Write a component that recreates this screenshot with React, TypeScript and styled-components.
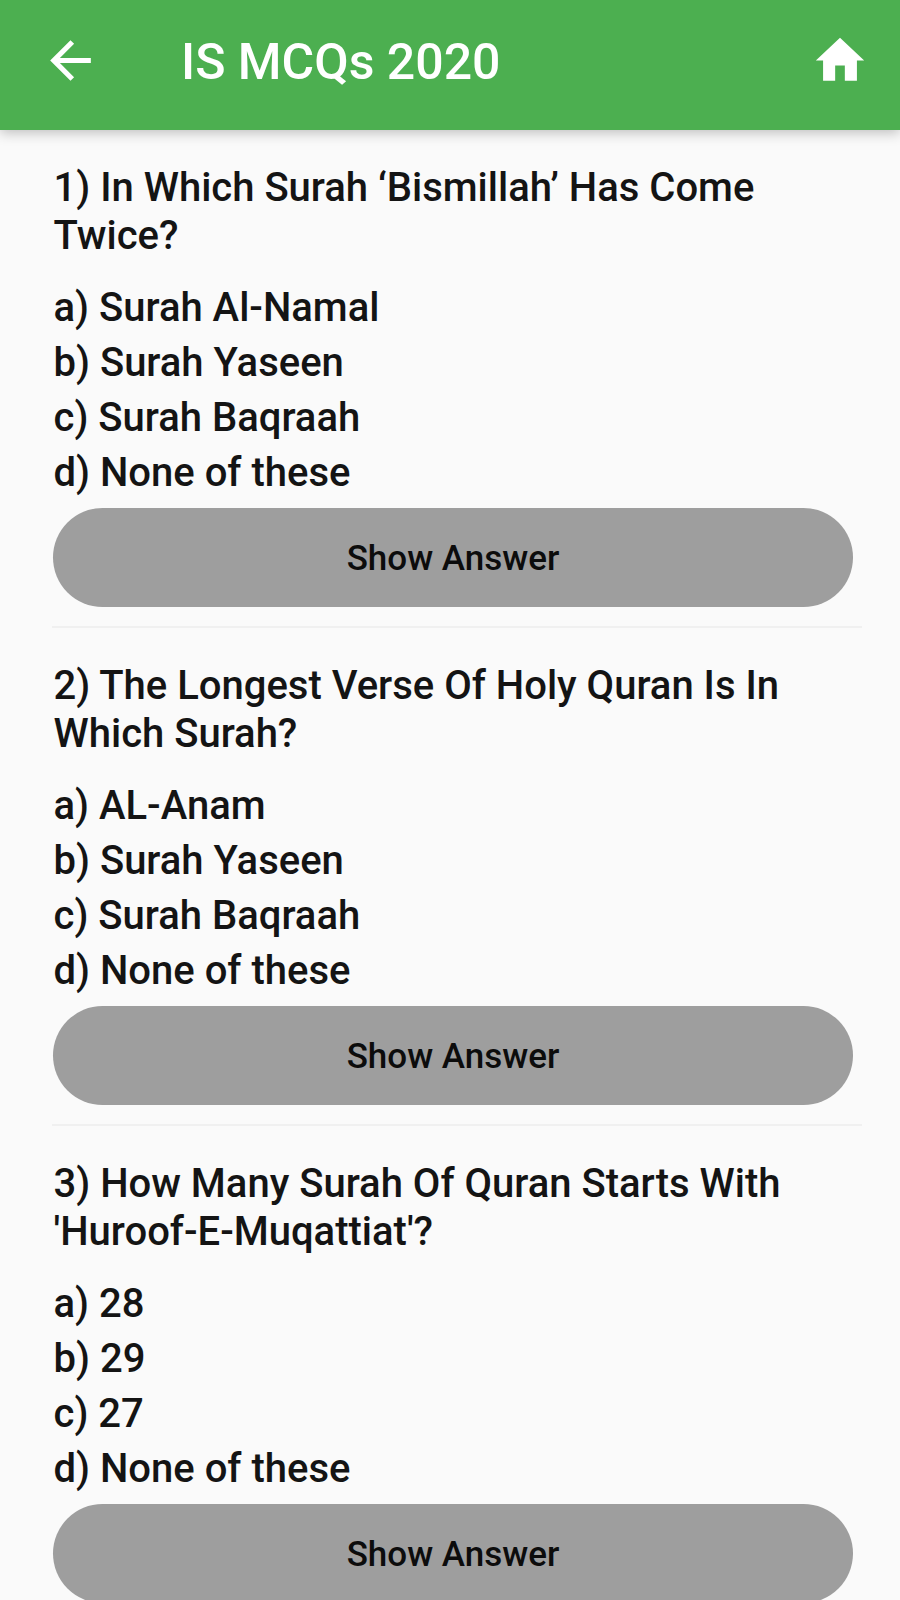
import React from "react";
import styled, { createGlobalStyle } from "styled-components";

const GlobalStyle = createGlobalStyle`
  * { box-sizing: border-box; }
  body { margin: 0; background: #fafafa; overflow: hidden; }
`;

const Screen = styled.div`
  width: 900px;
  height: 1600px;
  overflow: hidden;
  background: #fafafa;
  color: #141414;
  font-family: Roboto, sans-serif;
  font-weight: 500;
`;

const AppBar = styled.header`
  display: flex;
  align-items: center;
  height: 130px;
  padding: 0 31px 9px 40px;
  background: #4caf50;
  color: #fff;
  box-shadow: 0 3px 12px rgba(0, 0, 0, 0.24);
`;

const Title = styled.h1`
  flex: 1;
  margin: 0 0 0 80px;
  padding-top: 2px;
  font-size: 50px;
  font-weight: 500;
  line-height: 60px;
  white-space: nowrap;
`;

const IconButton = styled.button`
  display: flex;
  padding: 0;
  border: 0;
  background: none;
  color: inherit;
`;

const List = styled.main`
  padding: 34px 38px 0 52px;
`;

const Card = styled.section`
  height: 498px;
  padding-left: 1px;
`;

const Question = styled.h2`
  margin: 0 0 21px;
  padding-left: 0.5px;
  font-size: 40px;
  font-weight: 500;
  line-height: 47.5px;
  white-space: pre;
`;

const Option = styled.div`
  height: 55px;
  padding-left: 0.5px;
  font-size: 40px;
  line-height: 55px;
`;

const AnswerButton = styled.button`
  display: block;
  width: 800px;
  height: 99px;
  margin: 8px 0 19px;
  padding: 1px 0 0;
  border: 0;
  border-radius: 50px;
  background: #9e9e9e;
  color: #0c0c0c;
  font: 500 35px Roboto, sans-serif;
`;

const Divider = styled.hr`
  height: 2px;
  margin: 0 0 0 -1px;
  border: 0;
  background: #f0f0f0;
`;

const questions = [
  { text: "1) In Which Surah ‘Bismillah’ Has Come\nTwice?", options: ["a) Surah Al-Namal", "b) Surah Yaseen", "c) Surah Baqraah", "d) None of these"] },
  { text: "2) The Longest Verse Of Holy Quran Is In\nWhich Surah?", options: ["a) AL-Anam", "b) Surah Yaseen", "c) Surah Baqraah", "d) None of these"] },
  { text: "3) How Many Surah Of Quran Starts With\n'Huroof-E-Muqattiat'?", options: ["a) 28", "b) 29", "c) 27", "d) None of these"] },
];

export default function App() {
  return (
    <Screen>
      <GlobalStyle />
      <AppBar>
        <IconButton aria-label="Back">
          <svg width="61" height="61" viewBox="0 0 24 24" fill="currentColor"><path d="M20 11H7.83l5.59-5.59L12 4l-8 8 8 8 1.41-1.41L7.83 13H20v-2z" /></svg>
        </IconButton>
        <Title>IS MCQs 2020</Title>
        <IconButton aria-label="Home">
          <svg width="58" height="61" viewBox="0 0 24 24" preserveAspectRatio="none" fill="currentColor"><path d="M10 20v-6h4v6h5v-8h3L12 3 2 12h3v8z" /></svg>
        </IconButton>
      </AppBar>
      <List>
        {questions.map((q) => (
          <Card key={q.text}>
            <Question>{q.text}</Question>
            {q.options.map((o) => <Option key={o}>{o}</Option>)}
            <AnswerButton>Show Answer</AnswerButton>
            <Divider />
          </Card>
        ))}
      </List>
    </Screen>
  );
}
